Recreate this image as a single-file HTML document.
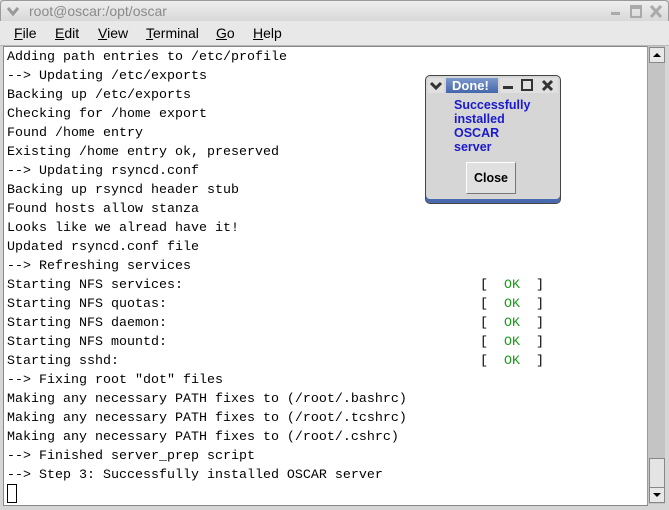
<!DOCTYPE html>
<html><head><style>
body{margin:0;width:669px;height:510px;overflow:hidden;background:#d6d6d6;font-family:"Liberation Sans",sans-serif;position:relative}
.title{position:absolute;left:0;top:0;width:667px;height:20px;background:linear-gradient(#eeeeee,#d8d8d8);border:1px solid #9a9a9a;border-bottom:1px solid #b0b0b0;border-radius:4px 4px 0 0}
.title span{position:absolute;left:28px;top:2px;font-size:14px;color:#8a8a8a}
.menu{position:absolute;left:0;top:21px;width:669px;height:24px;background:#e8e8e8;border-bottom:1px solid #b8b8b8}
.menu span{position:absolute;top:4px;font-size:14px;color:#000}
.term{position:absolute;left:3px;top:46px;width:643px;height:458px;background:#fff;border:1px solid #888}
.txt{position:absolute;left:7px;top:48px;font-family:"Liberation Mono",monospace;font-size:13.33px;line-height:19px;white-space:pre;color:#000}
.ok{position:absolute;font-family:"Liberation Mono",monospace;font-size:13.33px;white-space:pre}
.sb{position:absolute;left:647px;top:46px;width:17px;height:458px;background:#c4c4c4;border-left:1px solid #999}
.dlg{position:absolute;left:425px;top:75px;width:134px;height:127px;background:#d6d6d6;border:1px solid #444;border-radius:5px;box-shadow:inset 0 -4px 0 #4a6ab0}
</style></head><body>
<div class="title"><svg style="position:absolute;left:6px;top:5px" width="12" height="10"><path d="M1 2 L6 8 L11 2" stroke="#999" stroke-width="3" fill="none"/></svg><span>root@oscar:/opt/oscar</span>
<svg style="position:absolute;left:608px;top:4px" width="56" height="14"><rect x="2" y="7" width="9" height="3" fill="#aaa"/><rect x="22" y="1" width="10" height="11" fill="none" stroke="#aaa" stroke-width="2"/><rect x="22" y="1" width="10" height="3" fill="#aaa"/><path d="M42 1 L52 12 M52 1 L42 12" stroke="#aaa" stroke-width="3"/></svg></div>
<div class="menu"><span style="left:14px"><u>F</u>ile</span><span style="left:55px"><u>E</u>dit</span><span style="left:98px"><u>V</u>iew</span><span style="left:146px"><u>T</u>erminal</span><span style="left:216px"><u>G</u>o</span><span style="left:253px"><u>H</u>elp</span></div>
<div class="term"></div>
<div class="txt">Adding path entries to /etc/profile
--&gt; Updating /etc/exports
Backing up /etc/exports
Checking for /home export
Found /home entry
Existing /home entry ok, preserved
--&gt; Updating rsyncd.conf
Backing up rsyncd header stub
Found hosts allow stanza
Looks like we alread have it!
Updated rsyncd.conf file
--&gt; Refreshing services
Starting NFS services:
Starting NFS quotas:
Starting NFS daemon:
Starting NFS mountd:
Starting sshd:
--&gt; Fixing root "dot" files
Making any necessary PATH fixes to (/root/.bashrc)
Making any necessary PATH fixes to (/root/.tcshrc)
Making any necessary PATH fixes to (/root/.cshrc)
--&gt; Finished server_prep script
--&gt; Step 3: Successfully installed OSCAR server</div>
<div class="ok" style="left:480px;top:276px;line-height:19px">[  <span style="color:#1a9a1a">OK</span>  ]
[  <span style="color:#1a9a1a">OK</span>  ]
[  <span style="color:#1a9a1a">OK</span>  ]
[  <span style="color:#1a9a1a">OK</span>  ]
[  <span style="color:#1a9a1a">OK</span>  ]</div>
<div style="position:absolute;left:7px;top:484px;width:8px;height:17px;border:1px solid #000"></div>
<div class="sb">
<div style="position:absolute;left:1px;top:1px;width:14px;height:14px;background:#e8e8e8;border:1px solid #888"><svg width="14" height="14"><path d="M3 9 L7 5 L11 9Z" fill="#000"/></svg></div>
<div style="position:absolute;left:1px;top:412px;width:14px;height:29px;background:#e4e4e4;border:1px solid #888"></div>
<div style="position:absolute;left:1px;top:441px;width:14px;height:14px;background:#e8e8e8;border:1px solid #888"><svg width="14" height="14"><path d="M3 5 L7 9 L11 5Z" fill="#000"/></svg></div>
</div>
<div class="dlg">
<div style="position:absolute;left:2px;top:2px;width:16px;height:15px;background:#e0e0e0"><svg width="16" height="15"><path d="M3 5 L8 10 L13 5" stroke="#333" stroke-width="3" fill="none"/></svg></div>
<div style="position:absolute;left:20px;top:2px;width:52px;height:15px;background:linear-gradient(#7d98cc,#4466aa);color:#fff;font-weight:bold;font-size:13px;line-height:15px;padding-left:6px;box-sizing:border-box">Done!</div>
<div style="position:absolute;left:74px;top:2px;width:58px;height:15px;background:#e0e0e0"><svg width="58" height="15"><rect x="3" y="8" width="10" height="3" fill="#333"/><rect x="22" y="2" width="10" height="10" fill="none" stroke="#333" stroke-width="2"/><path d="M43 3 L52 12 M52 3 L43 12" stroke="#333" stroke-width="3"/></svg></div>
<div style="position:absolute;left:28px;top:22px;color:#1a1acc;font-weight:bold;font-size:12.5px;line-height:14px">Successfully<br>installed<br>OSCAR<br>server</div>
<div style="position:absolute;left:40px;top:86px;width:50px;height:32px;background:#e0e0e0;border:1px solid #fff;border-right-color:#777;border-bottom-color:#777;box-sizing:border-box;text-align:center;line-height:30px;font-size:12.5px;font-weight:bold">Close</div>
</div>
</body></html>
